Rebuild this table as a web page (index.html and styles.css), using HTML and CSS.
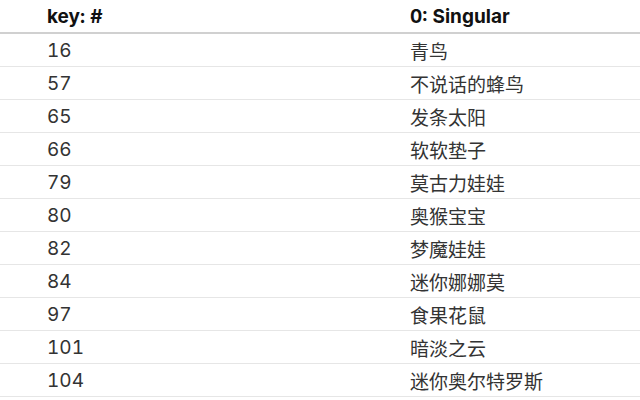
FILE: index.html
```html
<!DOCTYPE html>
<html lang="zh">
<head>
<meta charset="utf-8">
<link rel="stylesheet" href="styles.css">
</head>
<body>
<table class="tbl">
  <thead>
    <tr><th class="c1">key: #</th><th class="c2">0: Singular</th></tr>
  </thead>
  <tbody>
    <tr><td class="c1">16</td><td class="c2">青鸟</td></tr>
    <tr><td class="c1">57</td><td class="c2">不说话的蜂鸟</td></tr>
    <tr><td class="c1">65</td><td class="c2">发条太阳</td></tr>
    <tr><td class="c1">66</td><td class="c2">软软垫子</td></tr>
    <tr><td class="c1">79</td><td class="c2">莫古力娃娃</td></tr>
    <tr><td class="c1">80</td><td class="c2">奥猴宝宝</td></tr>
    <tr><td class="c1">82</td><td class="c2">梦魔娃娃</td></tr>
    <tr><td class="c1">84</td><td class="c2">迷你娜娜莫</td></tr>
    <tr><td class="c1">97</td><td class="c2">食果花鼠</td></tr>
    <tr><td class="c1">101</td><td class="c2">暗淡之云</td></tr>
    <tr><td class="c1">104</td><td class="c2">迷你奥尔特罗斯</td></tr>
  </tbody>
</table>
</body>
</html>
```
FILE: styles.css
```css
html, body {
  margin: 0;
  padding: 0;
  background: #ffffff;
}
body {
  font-family: Inter, "Noto Sans CJK SC", sans-serif;
  font-size: 19px;
  color: #333333;
  font-variant-numeric: tabular-nums;
}
.tbl {
  width: 640px;
  border-collapse: collapse;
  table-layout: fixed;
}
.tbl th, .tbl td {
  padding: 0;
  text-align: left;
  vertical-align: middle;
}
.tbl th {
  height: 32px;
  font-weight: 700;
  color: #111111;
  border-bottom: 2px solid #d0d0d0;
}
.tbl td {
  height: 32px;
  border-bottom: 1px solid #e6e6e6;
}
.c1 {
  width: 363px;
  padding-left: 47px !important;
}
```
